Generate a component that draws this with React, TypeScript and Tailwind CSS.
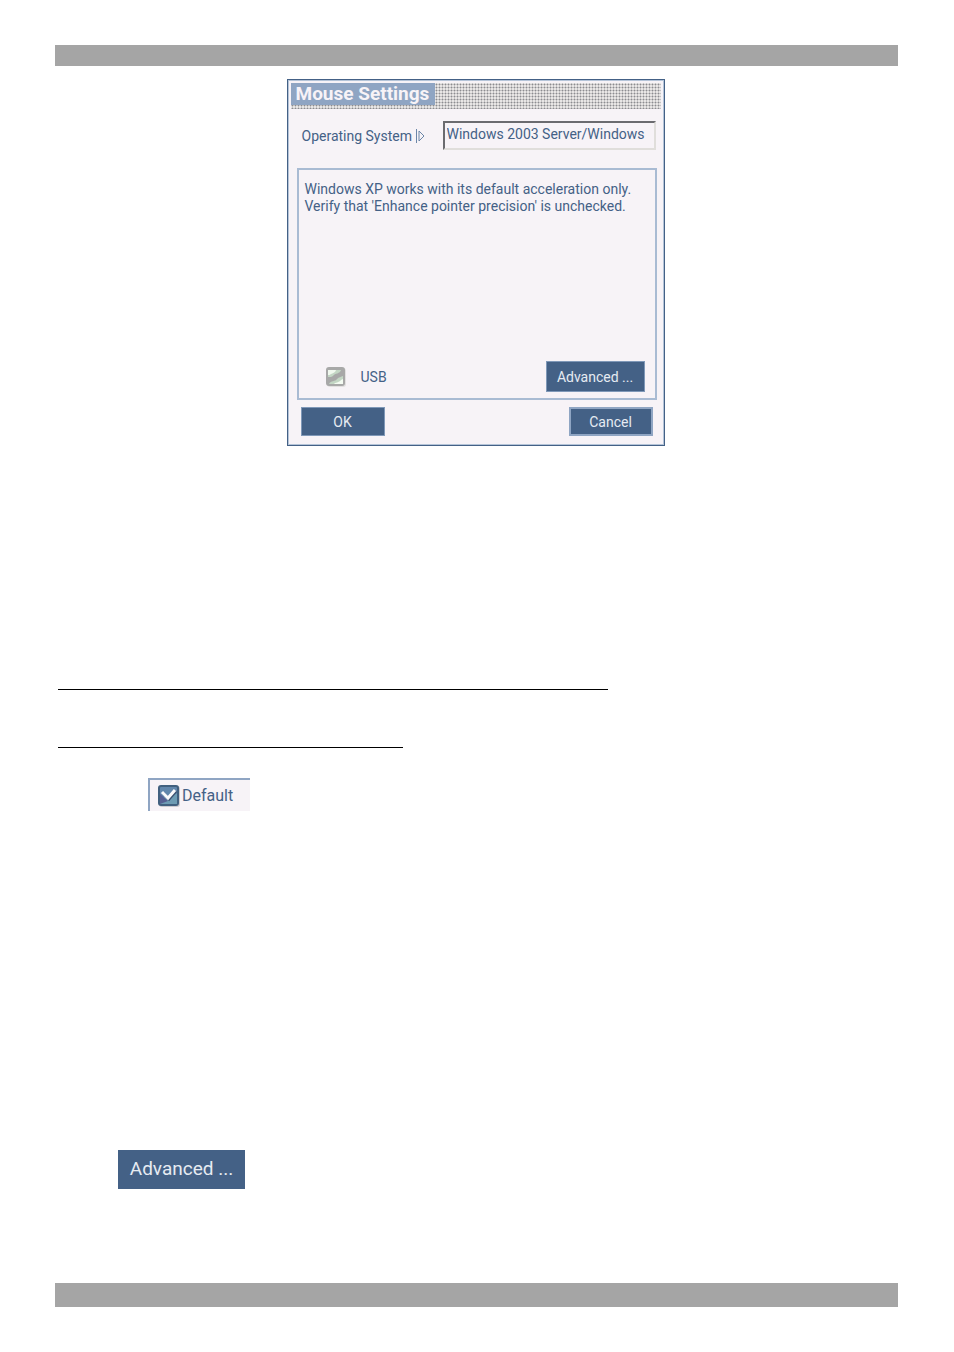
import { ReactNode } from "react";

const uiFont = "font-[Roboto,'Liberation_Sans',sans-serif]";

function Bar({ className }: { className: string }) {
  return <div className={`bg-[#a5a5a5] ${className}`} />;
}

function DialogButton({
  children,
  className,
}: {
  children: ReactNode;
  className: string;
}) {
  return (
    <button
      type="button"
      className={`bg-[#446186] text-center text-[#e6ebf2] ${className}`}
    >
      {children}
    </button>
  );
}

function UsbBox() {
  return (
    <svg width="20" height="20" viewBox="0 0 20 20" aria-hidden="true">
      <rect x="1" y="1" width="19" height="19" rx="3" fill="#e2e0e0" />
      <rect x="0" y="0" width="19" height="19" rx="3" fill="#a8a8a8" />
      <path d="M2 3h13c-1 4-6 3-8 6-1 1-3 1-5 1z" fill="#c3d6c4" />
      <path d="M2 3h8c-1 3-3 3-5 4-1 1-2 1-3 1z" fill="#f0f8ee" />
      <path d="M17 9v8H3c2-4 6-2 8-5 2-2 4-2 6-3z" fill="#c3d6c4" />
      <path d="M17 12v5H8c1-2 5-1 7-4z" fill="#f4fbf2" />
    </svg>
  );
}

function TickBox() {
  return (
    <svg width="22" height="22" viewBox="0 0 22 22" aria-hidden="true">
      <rect x="1" y="1" width="21" height="21" rx="3" fill="#cdcbd0" />
      <rect x="0" y="0" width="21" height="21" rx="3" fill="#41607f" />
      <rect x="2" y="2" width="17" height="17" rx="1" fill="#6287ac" />
      <path d="M2 12c5 1 9-3 17-3v10H2z" fill="#6d9bb3" />
      <path d="M2 9l8 7-8 3z" fill="#565f92" />
      <path
        d="M5 8l6 6 7-8"
        fill="none"
        stroke="#3d5271"
        strokeWidth="3"
      />
      <path d="M4 7l6 6 7-8" fill="none" stroke="#fbfafc" strokeWidth="3" />
    </svg>
  );
}

function MouseSettings() {
  return (
    <section className="mx-auto mt-[13px] w-[378px] border border-[#446186] bg-[#f7f3f7] text-sm text-[#446186]">
      <div className="border border-[#b4c4d8] px-0.5 pb-2 pt-0.5">
        <div className="h-[26px] bg-[#e8e6e5] bg-[radial-gradient(circle,#8c8c90_0.7px,transparent_1.2px)] bg-[length:3px_3px]">
          <h1 className="flex h-[22px] w-[144px] items-center bg-[#8fa5c3] pl-[5px] text-[19px] font-bold text-[#f7f3f7]">
            Mouse Settings
          </h1>
        </div>

        <div className="mt-3 flex items-center justify-between pl-[11px] pr-[5px]">
          <label htmlFor="os" className="flex items-center gap-1">
            Operating System
            <svg width="9" height="14" viewBox="0 0 9 14" aria-hidden="true">
              <path
                d="M0.5 0v14M3 2l5 5-5 5z"
                fill="none"
                stroke="#6c86a8"
                strokeWidth="1"
              />
            </svg>
          </label>
          <input
            id="os"
            readOnly
            defaultValue="Windows 2003 Server/Windows"
            className="h-[29px] w-[213px] border-2 border-b-[#e0dedb] border-l-[#6b6b6f] border-r-[#e0dedb] border-t-[#6b6b6f] bg-[#f7f3f7] pb-1 pl-0.5 outline-none"
          />
        </div>

        <div className="ml-1.5 mr-1 mt-[18px] flex h-[232px] flex-col justify-between border-2 border-[#a9bbd3] pb-1.5 pl-1.5 pr-2.5 pt-[11px]">
          <p className="leading-[17px]">
            Windows XP works with its default acceleration only.
            <br />
            Verify that 'Enhance pointer precision' is unchecked.
          </p>
          <div className="flex items-center justify-between pl-[21px]">
            <label className="flex items-center gap-[15px]">
              <input type="checkbox" className="sr-only" />
              <UsbBox />
              USB
            </label>
            <DialogButton className="h-[31px] w-[99px] border border-[#7f98b8]">
              Advanced ...
            </DialogButton>
          </div>
        </div>

        <div className="mt-[7px] flex justify-between pl-[10px] pr-2">
          <DialogButton className="h-[29px] w-[84px] border border-[#7f98b8]">
            OK
          </DialogButton>
          <DialogButton className="h-[29px] w-[84px] border-2 border-[#8fa5c3]">
            Cancel
          </DialogButton>
        </div>
      </div>
    </section>
  );
}

export default function App() {
  return (
    <div
      className={`flex min-h-screen flex-col bg-white pb-[45px] pl-[55px] pr-14 pt-[45px] ${uiFont}`}
    >
      <Bar className="h-[21px]" />
      <main className="flex flex-1 flex-col items-start pr-0.5">
        <MouseSettings />
        <hr className="ml-[3px] mt-[243px] w-[550px] max-w-full border-black" />
        <hr className="ml-[3px] mt-[57px] w-[345px] max-w-full border-black" />

        <label className="ml-[93px] mt-[30px] flex h-[33px] w-[102px] items-center gap-0.5 border-l-2 border-t-2 border-[#8fa5c3] bg-[#f7f3f7] pl-2 text-[#446186]">
          <input type="checkbox" defaultChecked className="sr-only" />
          <TickBox />
          Default
        </label>

        <button
          type="button"
          className="ml-[63px] mt-[339px] h-[39px] w-[127px] bg-[#446186] text-[19px] text-[#e6ebf2]"
        >
          Advanced ...
        </button>
      </main>
      <Bar className="h-6" />
    </div>
  );
}
